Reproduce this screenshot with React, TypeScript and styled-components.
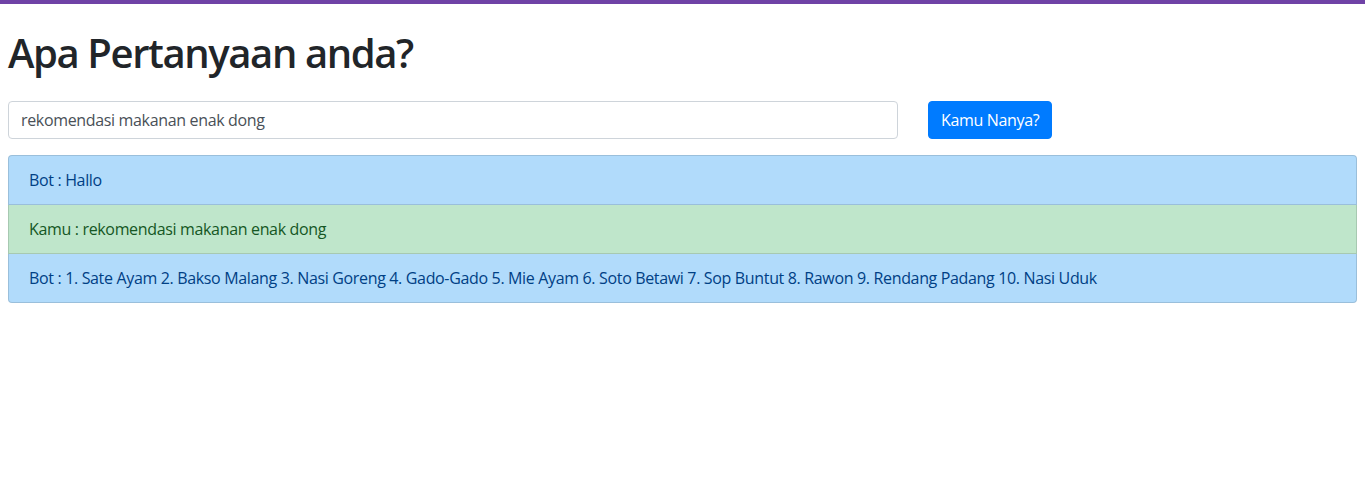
import React from "react";
import styled, { createGlobalStyle } from "styled-components";

const GlobalStyle = createGlobalStyle`
  html, body { margin: 0; padding: 0; background: #fff; }
  body {
    font-family: "Open Sans", "Noto Sans", sans-serif;
    font-size: 16px;
    line-height: 1.5;
    letter-spacing: -0.34px;
    color: #212529;
    border-top: 4px solid #6f42a6;
  }
  * { box-sizing: border-box; }
`;

const Page = styled.div`
  padding: 25px 8px 8px;
`;

const Title = styled.h1`
  margin: 0 0 24px;
  font-size: 40px;
  font-weight: 600;
  line-height: 1.2;
  letter-spacing: -1.4px;
  color: #212529;
`;

const Form = styled.form`
  display: flex;
  align-items: center;
  gap: 30px;
  margin-bottom: 16px;
`;

const Input = styled.input`
  width: 890px;
  height: 38px;
  padding: 6px 12px;
  font: inherit;
  letter-spacing: inherit;
  color: #495057;
  background: #fff;
  border: 1px solid #ced4da;
  border-radius: 4px;
  outline: none;
`;

const Button = styled.button`
  height: 38px;
  padding: 6px 12px;
  font: inherit;
  letter-spacing: inherit;
  color: #fff;
  background: #007bff;
  border: 1px solid #007bff;
  border-radius: 4px;
  cursor: pointer;
`;

const List = styled.ul`
  list-style: none;
  margin: 0;
  padding: 0;
  display: flex;
  flex-direction: column;
`;

const Item = styled.li<{ $kind: "bot" | "user" }>`
  padding: 12px 20px;
  line-height: 24px;
  border: 1px solid rgba(0, 0, 0, 0.125);
  background: ${(p) => (p.$kind === "bot" ? "#b1dbfb" : "#bfe6cb")};
  color: ${(p) => (p.$kind === "bot" ? "#004085" : "#155724")};
  & + & { border-top-width: 0; }
  &:first-child { border-top-left-radius: 4px; border-top-right-radius: 4px; }
  &:last-child { border-bottom-left-radius: 4px; border-bottom-right-radius: 4px; }
`;

const messages: { kind: "bot" | "user"; text: string }[] = [
  { kind: "bot", text: "Bot : Hallo" },
  { kind: "user", text: "Kamu : rekomendasi makanan enak dong" },
  {
    kind: "bot",
    text: "Bot : 1. Sate Ayam 2. Bakso Malang 3. Nasi Goreng 4. Gado-Gado 5. Mie Ayam 6. Soto Betawi 7. Sop Buntut 8. Rawon 9. Rendang Padang 10. Nasi Uduk",
  },
];

export default function App() {
  return (
    <>
      <GlobalStyle />
      <Page>
        <Title>Apa Pertanyaan anda?</Title>
        <Form onSubmit={(e) => e.preventDefault()}>
          <Input defaultValue="rekomendasi makanan enak dong" />
          <Button type="submit">Kamu Nanya?</Button>
        </Form>
        <List>
          {messages.map((m, i) => (
            <Item key={i} $kind={m.kind}>
              {m.text}
            </Item>
          ))}
        </List>
      </Page>
    </>
  );
}
